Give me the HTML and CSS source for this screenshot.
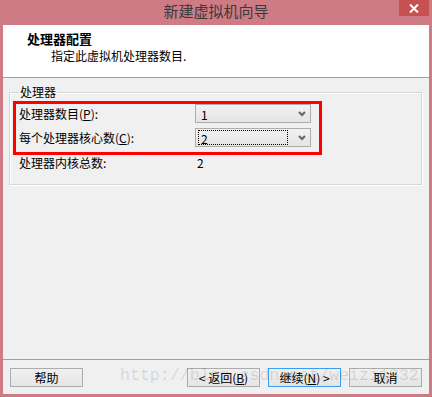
FILE: index.html
```html
<!DOCTYPE html>
<html lang="zh-CN">
<head>
    <meta charset="UTF-8">
    <title>新建虚拟机向导</title>
    <link rel="stylesheet" href="styles.css">
</head>
<body>
    <div class="window">
        <div class="titlebar">
            <span></span>
            <div class="title">新建虚拟机向导</div>
            <div class="controls">
                <div class="close">
                    <svg width="10" height="9" viewBox="0 0 10 9"><path d="M1 0.5 L9 8.5 M9 0.5 L1 8.5" stroke="#fff" stroke-width="2"/></svg>
                </div>
            </div>
        </div>

        <div class="client">
            <div class="header">
                <div class="header-title">处理器配置</div>
                <div class="header-sub">指定此虚拟机处理器数目.</div>
            </div>

            <div class="content">
                <fieldset class="group">
                    <legend>处理器</legend>

                    <div class="highlight">
                        <div class="row">
                            <label>处理器数目(<u>P</u>):</label>
                            <div class="combo">
                                <span class="value">1</span>
                                <svg class="arrow" width="8" height="6" viewBox="0 0 8 6"><path d="M1 1 L4 4 L7 1" fill="none" stroke="#666" stroke-width="2"/></svg>
                            </div>
                        </div>
                        <div class="row">
                            <label>每个处理器核心数(<u>C</u>):</label>
                            <div class="combo">
                                <span class="value focus">2</span>
                                <svg class="arrow" width="8" height="6" viewBox="0 0 8 6"><path d="M1 1 L4 4 L7 1" fill="none" stroke="#666" stroke-width="2"/></svg>
                            </div>
                        </div>
                    </div>

                    <div class="total">
                        <span class="total-label">处理器内核总数:</span>
                        <span>2</span>
                    </div>
                </fieldset>
            </div>

            <div class="footer">
                <button class="btn">帮助</button>
                <div class="nav">
                    <button class="btn">&lt; 返回(<u>B</u>)</button>
                    <button class="btn default">继续(<u>N</u>) &gt;</button>
                    <button class="btn">取消</button>
                </div>
            </div>
        </div>

        <div class="watermark">http://blog.csdn.net/weizi1832</div>
    </div>
</body>
</html>
```

FILE: styles.css
```css
:root {
    --frame-color: #cf7b86;
    --close-color: #c75050;
    --face-color: #f0f0f0;
    --line-color: #a0a0a0;
    --button-border: #acacac;
}

body {
    margin: 0;
    font-family: 'Noto Sans CJK SC', 'Noto Sans', sans-serif;
    font-size: 12px;
    color: #000;
}

.window {
    position: relative;
    width: 432px;
    height: 397px;
    box-sizing: border-box;
    padding: 0 3px 3px 3px;
    background-color: var(--frame-color);
    display: flex;
    flex-direction: column;
}

.titlebar {
    height: 25px;
    display: grid;
    grid-template-columns: 1fr auto 1fr;
}

.title {
    font-size: 15px;
    line-height: 22px;
    color: #3a3a3a;
}

.controls {
    display: flex;
    justify-content: flex-end;
    align-items: flex-start;
}

.close {
    width: 30px;
    height: 16px;
    background-color: var(--close-color);
    display: flex;
    align-items: center;
    justify-content: center;
}

.client {
    flex: 1;
    background-color: var(--face-color);
    display: flex;
    flex-direction: column;
}

.header {
    height: 53px;
    box-sizing: border-box;
    padding: 6px 0 0 24px;
    background-color: white;
    border-bottom: 1px solid var(--line-color);
}

.header-title {
    font-size: 13px;
    font-weight: bold;
    line-height: 16px;
}

.header-sub {
    margin: 1px 0 0 24px;
    line-height: 16px;
}

.content {
    flex: 1;
    padding: 7px 7px 0 6px;
}

.group {
    margin: 0;
    padding: 0 0 14px 0;
    border: 1px solid #d5d5d5;
    box-shadow: inset 1px 1px #fff, 1px 1px #fff;
}

.group legend {
    margin-left: 9px;
    padding: 0 1px;
    line-height: 14px;
}

.highlight {
    width: 309px;
    box-sizing: border-box;
    margin: 2px 0 0 3px;
    padding: 0 8px 5px 3px;
    border: 3px solid #ff0000;
    display: flex;
    flex-direction: column;
    gap: 5px;
}

.row {
    display: grid;
    grid-template-columns: 176px 116px;
    align-items: center;
}

u {
    text-decoration: underline;
}

.combo {
    height: 19px;
    box-sizing: border-box;
    border: 1px solid var(--button-border);
    background: linear-gradient(#f2f2f2, #e4e4e4);
    display: flex;
    align-items: center;
    padding: 1px 4px 1px 2px;
}

.combo .value {
    flex: 1;
    height: 100%;
    box-sizing: border-box;
    padding-left: 2px;
    line-height: 15px;
    border: 1px solid transparent;
    margin-right: 10px;
}

.combo .focus {
    border: 1px dotted #000;
}

.total {
    display: grid;
    grid-template-columns: 178px auto;
    padding-left: 9px;
    margin-top: 1px;
    line-height: 14px;
}

.footer {
    border-top: 1px solid var(--line-color);
    padding: 8px 7px 7px 7px;
    display: flex;
    justify-content: space-between;
}

.nav {
    display: flex;
    gap: 8px;
}

.btn {
    width: 73px;
    height: 19px;
    padding: 0;
    font-family: inherit;
    font-size: 12px;
    line-height: 15px;
    color: #000;
    border: 1px solid var(--button-border);
    background: linear-gradient(#f0f0f0, #e5e5e5);
}

.btn.default {
    border-color: #3c9cf0;
}

.watermark {
    position: absolute;
    left: 120px;
    top: 366px;
    font-family: 'Liberation Mono', monospace;
    font-size: 16.6px;
    color: rgba(0, 0, 0, 0.12);
    pointer-events: none;
}
```
